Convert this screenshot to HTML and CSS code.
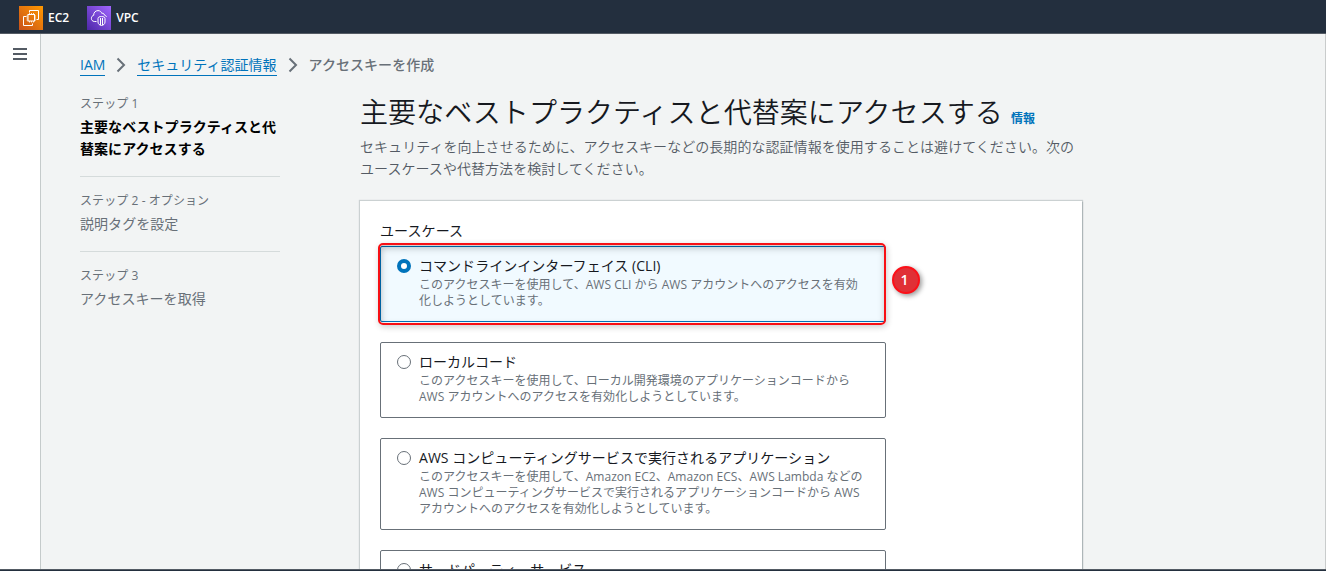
FILE: index.html
```html
<!DOCTYPE html>
<html lang="ja">
<head>
    <meta charset="UTF-8">
    <meta name="viewport" content="width=device-width, initial-scale=1.0">
    <title>アクセスキーを作成 | IAM</title>
    <link rel="stylesheet" href="styles.css">
</head>
<body>
    <header class="topbar">
        <a class="service">
            <svg width="24" height="24" viewBox="0 0 24 24">
                <defs>
                    <linearGradient id="orange" x1="0" y1="1" x2="1" y2="0">
                        <stop offset="0" stop-color="#c8511b"/>
                        <stop offset="1" stop-color="#ff9900"/>
                    </linearGradient>
                </defs>
                <rect width="24" height="24" fill="url(#orange)"/>
                <g fill="none" stroke="#fff" stroke-width="1">
                    <path d="M10.5 6.5V4.5H19.5V13.5H17.5M7.5 10.5H4.5V19.5H13.5V17.5"/>
                    <rect x="9" y="8.5" width="6.5" height="6.5"/>
                    <path d="M10.5 7v1.5M12.5 7v1.5M14.5 7v1.5M10.5 15v1.5M12.5 15v1.5M14.5 15v1.5M7.5 10h1.5M7.5 12h1.5M7.5 14h1.5M15.5 10h1.5M15.5 12h1.5M15.5 14h1.5" stroke-width=".8"/>
                </g>
            </svg>
            <span>EC2</span>
        </a>
        <a class="service">
            <svg width="24" height="24" viewBox="0 0 24 24">
                <defs>
                    <linearGradient id="purple" x1="0" y1="1" x2="1" y2="0">
                        <stop offset="0" stop-color="#4d27a8"/>
                        <stop offset="1" stop-color="#a166ff"/>
                    </linearGradient>
                </defs>
                <rect width="24" height="24" fill="url(#purple)"/>
                <g fill="none" stroke="#fff" stroke-width="1">
                    <path d="M9.5 15.5H7.3C5.4 15.3 4.3 14 4.4 12.3C4.400 10.700 5.300 9.700 6.700 9.300C6.500 6.600 8.500 4.600 11 4.600C13 4.600 14.300 5.700 14.900 7.500C16 6.800 17.200 7.500 17.300 9C18.500 9.300 19.300 9.900 19.400 11"/>
                    <path d="M14.500 10.500C16.500 10.500 18 11.200 18 12.500V16C18 18 16.500 19.200 14.500 19.500C12.500 19.200 11 18 11 16V12.500C11 11.200 12.500 10.500 14.500 10.500ZM13.500 12V19M15.500 12V19"/>
                </g>
            </svg>
            <span>VPC</span>
        </a>
    </header>

    <div class="layout">
        <nav class="sidebar">
            <svg width="14" height="12" viewBox="0 0 14 12">
                <path d="M0 1H14M0 6H14M0 11H14" stroke="#545b64" stroke-width="2"/>
            </svg>
        </nav>

        <div class="content">
            <div class="breadcrumb">
                <a>IAM</a>
                <svg width="10" height="16" viewBox="0 0 10 16"><path d="M1.500 1.500L8 8L1.500 14.500"/></svg>
                <a>セキュリティ認証情報</a>
                <svg width="10" height="16" viewBox="0 0 10 16"><path d="M1.500 1.500L8 8L1.500 14.500"/></svg>
                <span>アクセスキーを作成</span>
            </div>

            <div class="columns">
                <ul class="steps">
                    <li class="active">
                        <small>ステップ 1</small>
                        <span>主要なベストプラクティスと代<br>替案にアクセスする</span>
                    </li>
                    <li>
                        <small>ステップ 2 - オプション</small>
                        <span>説明タグを設定</span>
                    </li>
                    <li>
                        <small>ステップ 3</small>
                        <span>アクセスキーを取得</span>
                    </li>
                </ul>

                <main class="main">
                    <h1>主要なベストプラクティスと代替案にアクセスする<a class="info">情報</a></h1>
                    <p class="lead">セキュリティを向上させるために、アクセスキーなどの長期的な認証情報を使用することは避けてください。次の<br>ユースケースや代替方法を検討してください。</p>

                    <section class="card">
                        <div class="label">ユースケース</div>
                        <div class="tiles">
                            <div class="tile selected">
                                <i class="radio"></i>
                                <div>
                                    <div class="name">コマンドラインインターフェイス (CLI)</div>
                                    <div class="desc">このアクセスキーを使用して、AWS CLI から AWS アカウントへのアクセスを有効<br>化しようとしています。</div>
                                </div>
                                <div class="marker"></div>
                                <div class="badge">1</div>
                            </div>
                            <div class="tile">
                                <i class="radio"></i>
                                <div>
                                    <div class="name">ローカルコード</div>
                                    <div class="desc">このアクセスキーを使用して、ローカル開発環境のアプリケーションコードから<br>AWS アカウントへのアクセスを有効化しようとしています。</div>
                                </div>
                            </div>
                            <div class="tile">
                                <i class="radio"></i>
                                <div>
                                    <div class="name">AWS コンピューティングサービスで実行されるアプリケーション</div>
                                    <div class="desc">このアクセスキーを使用して、Amazon EC2、Amazon ECS、AWS Lambda などの<br>AWS コンピューティングサービスで実行されるアプリケーションコードから AWS<br>アカウントへのアクセスを有効化しようとしています。</div>
                                </div>
                            </div>
                            <div class="tile">
                                <i class="radio"></i>
                                <div>
                                    <div class="name">サードパーティーサービス</div>
                                </div>
                            </div>
                        </div>
                    </section>
                </main>
            </div>
        </div>
    </div>
    <footer class="footer"></footer>
</body>
</html>
```
FILE: styles.css
```css
* {
    box-sizing: border-box;
}
body {
    margin: 0;
    height: 571px;
    overflow: hidden;
    display: flex;
    flex-direction: column;
    font-family: "Open Sans", "Noto Sans CJK JP", sans-serif;
    font-size: 14px;
    line-height: 22px;
    color: #16191f;
    background: #f2f4f4;
}
.topbar {
    flex: none;
    display: flex;
    gap: 18px;
    height: 34px;
    padding: 6px 19px 0;
    background: #232f3e;
    border-bottom: 1px solid #545b64;
}
.service {
    display: flex;
    gap: 5px;
    height: 24px;
    line-height: 24px;
    font-size: 12px;
    font-weight: 600;
    color: #fff;
}
.layout {
    flex: 1;
    min-height: 0;
    display: flex;
    overflow: hidden;
    border-right: 1px solid #c9cccc;
}
.sidebar {
    flex: none;
    width: 41px;
    padding: 14px 13px;
    line-height: 0;
    background: #fff;
    border-right: 1px solid #c5cbcb;
}
.content {
    padding: 20px 0 0 39px;
}
.breadcrumb {
    display: flex;
    align-items: center;
    gap: 11px;
    height: 22px;
}
.breadcrumb a {
    height: 21px;
    line-height: 20px;
    color: #0073bb;
    border-bottom: 1px solid #0073bb;
}
.breadcrumb span {
    font-weight: 500;
    letter-spacing: 0.05px;
    color: #687078;
}
.breadcrumb path {
    fill: none;
    stroke: #687078;
    stroke-width: 2;
}
.columns {
    display: flex;
    gap: 80px;
}
.steps {
    flex: none;
    width: 200px;
    margin: 0;
    padding: 17px 0 0;
    list-style: none;
    color: #687078;
}
.steps li {
    height: 75px;
    padding-top: 13px;
    border-top: 1px solid #d5dbdb;
}
.steps li.active {
    height: 83px;
    padding-top: 0;
    border-top: 0;
    color: #000;
}
.steps small {
    display: block;
    height: 23px;
    font-size: 12px;
    letter-spacing: 0.08px;
    color: #687078;
}
.steps span {
    display: block;
    letter-spacing: 0.05px;
}
.steps .active span {
    font-weight: 600;
}
.main {
    flex: none;
    width: 722px;
    padding-top: 18px;
}
h1 {
    margin: 0;
    font-size: 28px;
    line-height: 36px;
    font-weight: 350;
    letter-spacing: 0.06px;
    white-space: nowrap;
}
.info {
    margin-left: 8px;
    font-size: 12px;
    font-weight: 700;
    color: #0073bb;
}
.lead {
    margin: 0 0 21px;
    position: relative;
    margin-top: -1px;
    color: #545b64;
    font-weight: 350;
    letter-spacing: 0.05px;
    white-space: nowrap;
}
.card {
    height: 500px;
    padding: 19px 20px;
    background: #fff;
    box-shadow: 0 0 1px 1px rgba(0, 28, 36, 0.16), 1px 1px 1px rgba(0, 28, 36, 0.15);
}
.label {
    margin-bottom: 4px;
    letter-spacing: 0.1px;
}
.tiles {
    display: flex;
    flex-direction: column;
    gap: 20px;
    width: 506px;
}
.tile {
    position: relative;
    display: flex;
    gap: 8px;
    padding: 8px 16px 12px;
    border: 1px solid #687078;
    border-radius: 2px;
    white-space: nowrap;
}
.tile.selected {
    background: #f1faff;
    border-color: #0073bb;
}
.radio {
    flex: none;
    width: 14px;
    height: 14px;
    margin-top: 4px;
    background: #fff;
    border: 1px solid #687078;
    border-radius: 50%;
}
.selected .radio {
    border: 4px solid #0073bb;
}
.name {
    letter-spacing: 0.04px;
}
.desc {
    font-size: 12px;
    line-height: 16px;
    letter-spacing: 0.02px;
    color: #687078;
}
/* red callout frame around the chosen tile */
.marker {
    position: absolute;
    inset: -4px -1px -4px -3px;
    border: 2px solid #f80f14;
    border-radius: 5px;
    box-shadow: 1px 2px 6px rgba(0, 0, 0, 0.2), inset 1px 3px 7px rgba(0, 0, 0, 0.25);
}
.badge {
    position: absolute;
    left: 511px;
    top: 19px;
    width: 28px;
    height: 28px;
    padding-right: 3px;
    border: 2px solid #fc1018;
    border-radius: 50%;
    background: #e03036;
    box-shadow: 2px 2px 5px rgba(0, 0, 0, 0.4);
    color: #fff;
    font-size: 14px;
    font-weight: 600;
    line-height: 23px;
    text-align: center;
}
.footer {
    flex: none;
    height: 2px;
    background: #232f3e;
    border-top: 1px solid #545b64;
}
```
